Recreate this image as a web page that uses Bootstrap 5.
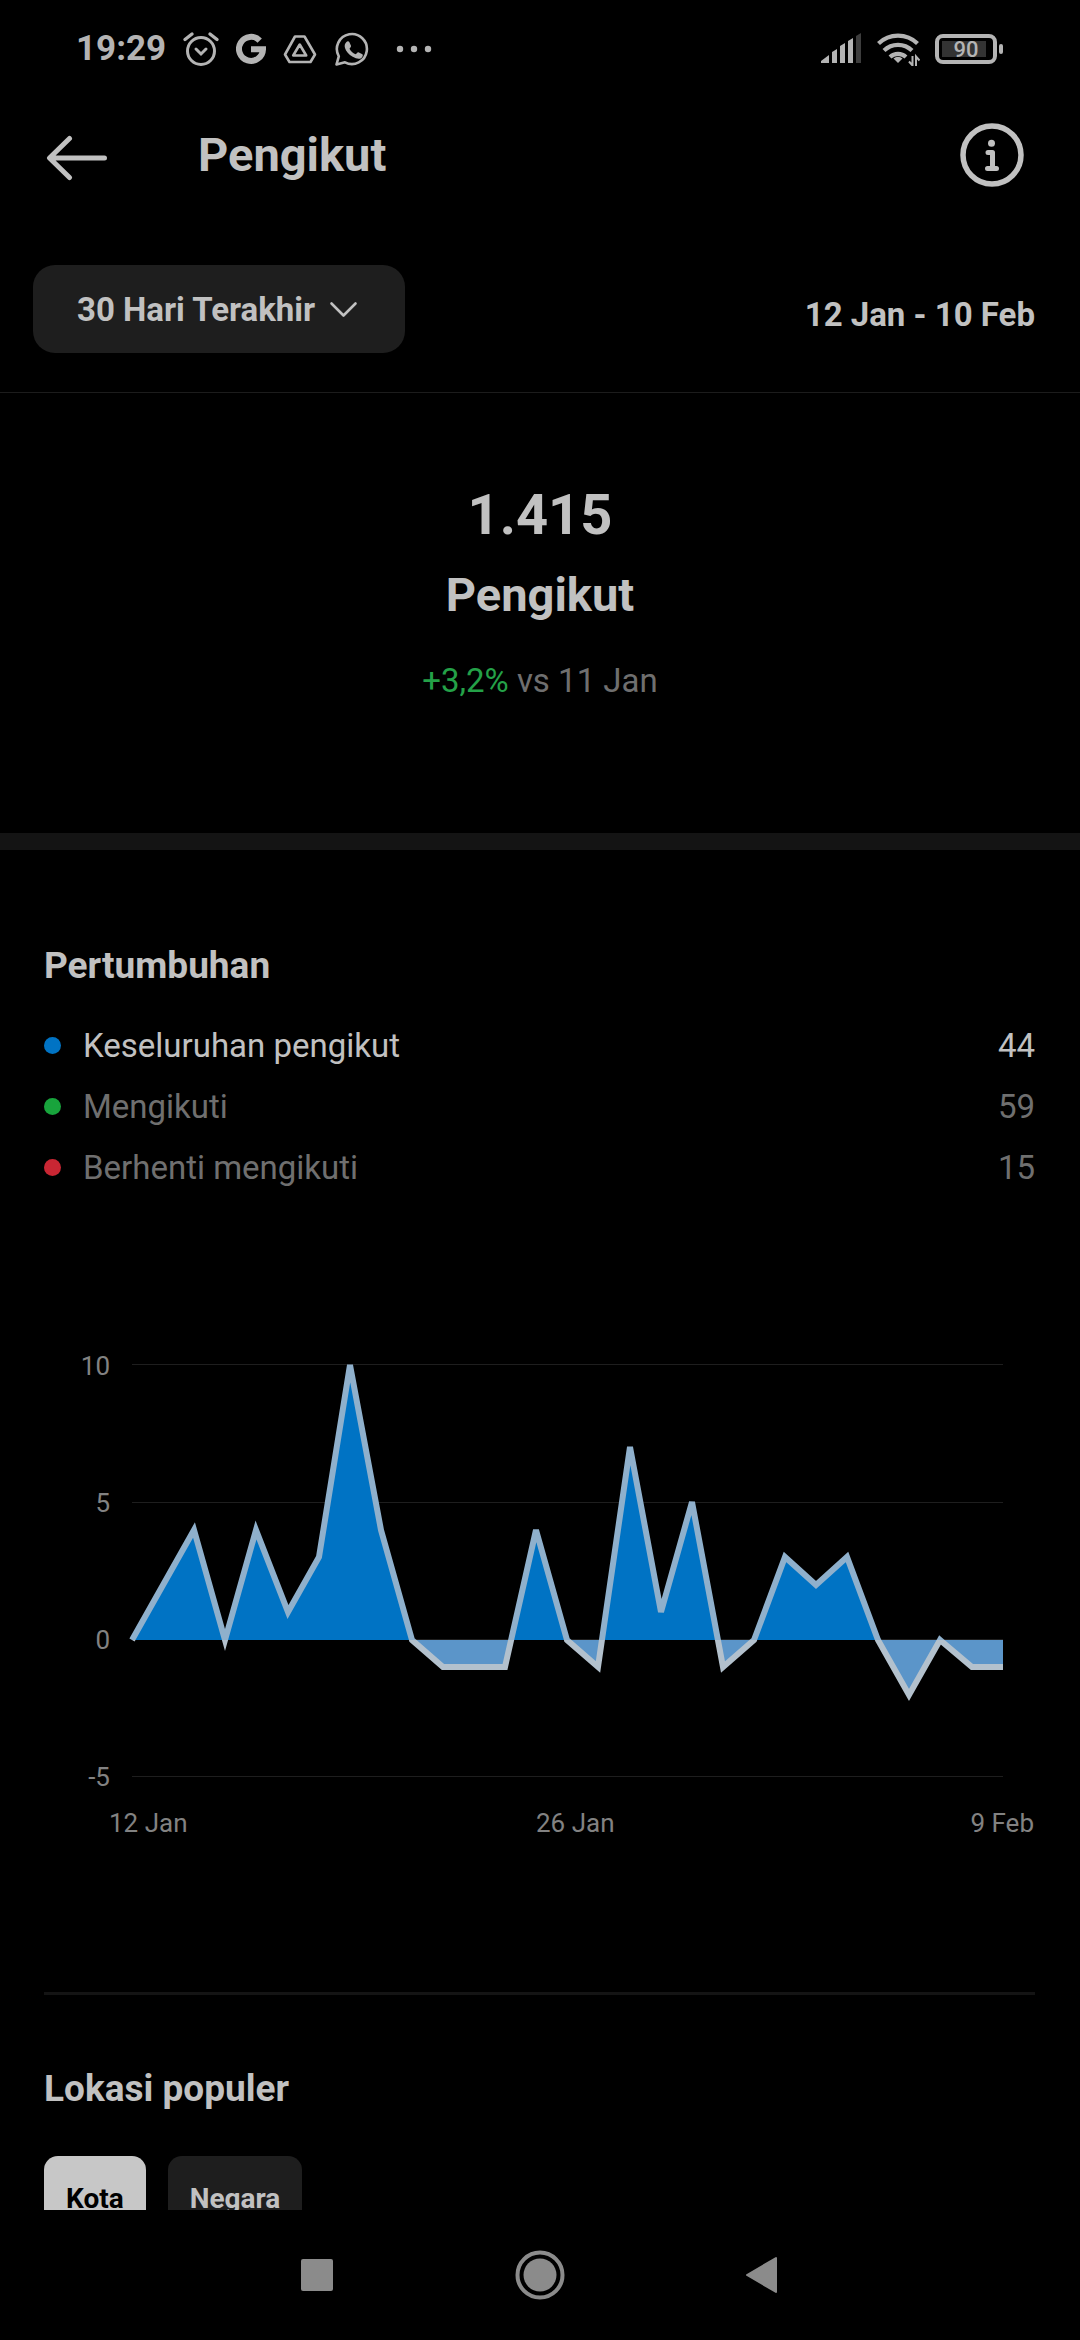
<!DOCTYPE html>
<html lang="id" data-bs-theme="dark">
<head>
<meta charset="utf-8">
<meta name="viewport" content="width=device-width, initial-scale=1">
<title>Pengikut</title>
<link href="https://cdn.jsdelivr.net/npm/bootstrap@5.3.0/dist/css/bootstrap.min.css" rel="stylesheet">
<style>
  :root { --ink: #c1c1c1; --dim: #6f6f6f; --panel: #1e1e1e; --rule: #141414; --sys: #b4b4b4; }
  body { font-family: Roboto, "Noto Sans", sans-serif; background: #000; color: var(--ink); font-size: 33px; }
  svg { display: block; flex: none; }
  .statusbar { height: 98px; padding: 0 77px 0 76px; color: var(--sys); }
  .status-right { gap: 14px; }
  .clock { font-size: 35px; line-height: 40px; font-weight: 700; }
  .topbar { height: 114px; padding: 0 56px 0 45px; }
  .title-text { font-size: 47px; line-height: 56px; font-weight: 700; color: var(--ink); }
  .icon-btn { color: inherit; background: none; border: 0; padding: 0; display: block; }
  .filterbar { padding: 53px 45px 39px 33px; border-bottom: 1px solid #1c1c1c; }
  .range-btn { height: 88px; padding: 2px 42px 0 44px; border: 0; border-radius: 22px; background: var(--panel); color: var(--ink);
    font-size: 33px; line-height: 40px; font-weight: 700; }
  .range-btn svg { margin-left: 10px; }
  .range-dates { font-size: 33px; line-height: 40px; font-weight: 700; padding-top: 11px; }
  .summary { padding: 90px 44px 132px; }
  .total { font-size: 56px; line-height: 64px; font-weight: 700; margin-bottom: 20px; }
  .delta { line-height: 40px; margin-top: 38px; color: var(--dim); }
  .gain { color: #24a148; }
  .band { height: 17px; background: var(--rule); }
  .growth { padding: 94px 45px 142px 44px; }
  .section-title { font-size: 37px; line-height: 44px; font-weight: 700; color: var(--ink); }
  .legend-list { margin: 27px 0 142px; line-height: 61px; color: var(--dim); }
  .legend-list .current { color: var(--ink); }
  .dot { width: 17px; height: 17px; border-radius: 50%; margin-right: 22px; }
  .dot-total { background: #0073c4; }
  .dot-gain { background: #18a43c; }
  .dot-loss { background: #c92633; }
  .axis-text { font-size: 26px; fill: #828282; }
  .places { margin: 0 45px 0 44px; padding-top: 72px; border-top: 3px solid var(--rule); }
  .pills { gap: 22px; margin-top: 45px; }
  .pill { padding: 25px 22px; border: 0; border-radius: 14px; background: var(--panel); color: var(--ink);
    font-size: 28px; line-height: 36px; font-weight: 700; }
  .pill.active { background: #c7c7c7; color: #000; }
  .sysnav { height: 130px; color: #8b8b8b; gap: 180px; }
</style>
</head>
<body class="vh-100 d-flex flex-column overflow-hidden">

<div class="statusbar d-flex align-items-center justify-content-between flex-shrink-0">
  <div class="d-flex align-items-center">
    <span class="clock">19:29</span>
    <svg class="ms-3" width="38" height="38" viewBox="182 30 38 38" fill="none" stroke="currentColor" stroke-width="3" stroke-linecap="round" aria-label="Alarm">
      <circle cx="201" cy="51" r="13.5"/><path d="M196 49l5 5 5-5"/><path stroke-width="3.4" d="M185 39.500l7-5.500M210 34l7 5.500"/>
    </svg>
    <svg class="ms-3" width="30" height="32" viewBox="236 32 30 32" fill="none" stroke="currentColor" stroke-width="6" aria-label="Google">
      <path d="M259.700 39.600A12 12 0 1 0 263 48.300H251"/>
    </svg>
    <svg class="ms-3" width="36" height="32" viewBox="283 32 36 32" fill="none" stroke="currentColor" stroke-width="2.600" stroke-linejoin="round" aria-label="Drive">
      <path d="M296 35.500h9.500l10.500 18-4.500 7.500h-21l-4.500-7.500zM300.700 43.500l-6.500 11h13z"/>
    </svg>
    <svg class="ms-3" width="36" height="36" viewBox="333 30 36 36" aria-label="WhatsApp">
      <path fill="none" stroke="currentColor" stroke-width="2.600" stroke-linejoin="round" d="M335.500 63.500l2.300-8.200A15 15 0 1 1 344 61.300z"/>
      <path fill="currentColor" d="M345.200 41.200c1-1.200 2.600-1.100 3.100-.2l1.700 3.800c.3.800-.9 2.200-1.500 2.900 1.500 2.800 3.800 4.700 6.300 5.600.8-.7 1.700-2.300 2.600-2l4 2c.9.500.2 2.700-1 3.600-2 1.500-5.200.9-8.700-1.100-4-2.300-6.700-5.800-7.700-8.900-.7-2.200-.2-4.300 1.200-5.700z"/>
    </svg>
    <svg class="ms-4" width="40" height="10" viewBox="395 43 40 10" fill="currentColor" aria-label="Lainnya">
      <circle cx="401" cy="48" r="3.200"/><circle cx="415" cy="48" r="3.200"/><circle cx="429" cy="48" r="3.200"/>
    </svg>
  </div>
  <div class="status-right d-flex align-items-center">
    <svg width="42" height="32" viewBox="820 33 42 32" fill="currentColor" aria-label="Sinyal">
      <path d="M821 63v-2l8-6v8zM832 63V52l5-3v14zM840 63V46l5-3v20zM848 63V41l5-3v25z"/><path fill="#3d3d3d" d="M856 63V36l5-3v30z"/>
    </svg>
    <svg width="44" height="34" viewBox="876 33 44 34" fill="none" stroke="currentColor" stroke-width="4.200" aria-label="Wi-Fi">
      <path d="M878.500 44.500a28 28 0 0 1 39 0M884 51.500a20 20 0 0 1 28 0M890 58a12 12 0 0 1 16 0"/>
      <path fill="currentColor" stroke="none" d="M898 64l-4.500-4.500a6.500 6.500 0 0 1 9 0z"/>
      <path stroke-width="2" d="M912.500 57v9.500l-3.500-4M916 67v-9.500l3.500 4"/>
    </svg>
    <svg width="69" height="34" viewBox="934 32 69 34" aria-label="Baterai 90%">
      <rect x="942" y="41" width="44" height="16" fill="#333"/>
      <rect x="937" y="36" width="58" height="26" rx="6" fill="none" stroke="currentColor" stroke-width="4"/>
      <rect x="999" y="44" width="4" height="10" rx="2" fill="currentColor"/>
      <text x="966" y="57" text-anchor="middle" font-size="22" font-weight="500" fill="currentColor">90</text>
    </svg>
  </div>
</div>

<main class="flex-grow-1 overflow-hidden">
  <header class="topbar d-flex align-items-center justify-content-between">
    <div class="d-flex align-items-center">
      <button class="icon-btn" type="button" aria-label="Kembali">
        <svg width="153" height="52" viewBox="45 129 153 52" fill="none" stroke="currentColor" stroke-width="5" stroke-linecap="round" stroke-linejoin="round"><path d="M69.500 138.500L49.500 158l20 19.500M50 158h54.500"/></svg>
      </button>
      <h1 class="title-text m-0">Pengikut</h1>
    </div>
    <button class="icon-btn" type="button" aria-label="Info">
      <svg width="64" height="64" viewBox="960 123 64 64" fill="none" stroke="currentColor" stroke-linecap="round" stroke-linejoin="round"><circle cx="992" cy="155" r="29" stroke-width="5.500"/><path stroke-width="5" d="M988 152.500h4.500v15.500M987.500 168.500h9"/><circle cx="991.500" cy="143.300" r="3.500" fill="currentColor" stroke="none"/></svg>
    </button>
  </header>

  <div class="filterbar d-flex align-items-center justify-content-between">
    <button class="range-btn d-flex align-items-center" type="button">30 Hari Terakhir
      <svg width="38" height="24" viewBox="326 299 38 24" fill="none" stroke="currentColor" stroke-width="2.600" stroke-linecap="round" stroke-linejoin="round"><path d="M332.500 304.500l12 12 12-12"/></svg>
    </button>
    <div class="range-dates">12 Jan - 10 Feb</div>
  </div>

  <section class="summary text-center">
    <div class="total">1.415</div>
    <div class="title-text">Pengikut</div>
    <div class="delta"><span class="gain">+3,2%</span> vs 11 Jan</div>
  </section>

  <div class="band"></div>

  <section class="growth">
    <h2 class="section-title m-0">Pertumbuhan</h2>
    <ul class="legend-list list-unstyled">
      <li class="current d-flex align-items-center"><span class="dot dot-total"></span>Keseluruhan pengikut<span class="ms-auto">44</span></li>
      <li class="d-flex align-items-center"><span class="dot dot-gain"></span>Mengikuti<span class="ms-auto">59</span></li>
      <li class="d-flex align-items-center"><span class="dot dot-loss"></span>Berhenti mengikuti<span class="ms-auto">15</span></li>
    </ul>
    <svg class="w-100" viewBox="0 0 991 510" role="img" aria-label="Grafik pertumbuhan pengikut">
      <defs>
        <clipPath id="above"><rect x="80" y="24" width="879" height="276"/></clipPath>
        <clipPath id="below"><rect x="80" y="300" width="879" height="150"/></clipPath>
        <!-- 31 units per day across, 27.5 units per follower upwards -->
        <path id="area" d="M88 300L119 245 150 190 181 300 212 190 244 272 275 217 306 25 337 190 368 300 399 327 430 327 461 327 492 190 523 300 554 327 586 107 617 272 648 162 679 327 710 300 741 217 772 245 803 217 834 300 865 355 896 300 928 327 959 327V300H88z"/>
        <polyline id="trend" fill="none" stroke-width="6" stroke-miterlimit="4" points="88,300 119,245 150,190 181,300 212,190 244,272 275,217 306,25 337,190 368,300 399,327 430,327 461,327 492,190 523,300 554,327 586,107 617,272 648,162 679,327 710,300 741,217 772,245 803,217 834,300 865,355 896,300 928,327 959,327"/>
      </defs>
      <path stroke="#1e1e1e" shape-rendering="crispEdges" d="M88 24.500h871M88 162.500h871M88 299.500h871M88 436.500h871"/>
      <g clip-path="url(#above)"><use href="#area" fill="#0073c4"/></g>
      <g clip-path="url(#below)"><use href="#area" fill="#5b95c9"/></g>
      <g clip-path="url(#above)"><use href="#trend" stroke="#8fb0cc"/></g>
      <g clip-path="url(#below)"><use href="#trend" stroke="#b3c1cd"/></g>
      <g class="axis-text" text-anchor="end">
        <text x="66" y="35">10</text><text x="66" y="172">5</text><text x="66" y="309">0</text><text x="66" y="446">-5</text>
        <text x="990" y="492">9 Feb</text>
      </g>
      <g class="axis-text"><text x="65" y="492">12 Jan</text><text x="492" y="492">26 Jan</text></g>
    </svg>
  </section>

  <section class="places">
    <h2 class="section-title m-0">Lokasi populer</h2>
    <div class="pills d-flex">
      <button class="pill active" type="button">Kota</button>
      <button class="pill" type="button">Negara</button>
    </div>
  </section>
</main>

<nav class="sysnav d-flex align-items-center justify-content-center flex-shrink-0" aria-label="Navigasi sistem">
  <button class="icon-btn" type="button" aria-label="Aplikasi terbaru"><svg width="36" height="40" viewBox="0 0 36 40" fill="currentColor"><rect x="2" y="4" width="32" height="32" rx="2"/></svg></button>
  <button class="icon-btn" type="button" aria-label="Beranda"><svg width="50" height="50" viewBox="0 0 50 50"><circle cx="25" cy="25" r="22.500" fill="none" stroke="currentColor" stroke-width="4"/><circle cx="25" cy="25" r="16.500" fill="currentColor"/></svg></button>
  <button class="icon-btn" type="button" aria-label="Kembali"><svg width="36" height="40" viewBox="0 0 36 40" fill="currentColor" stroke="currentColor" stroke-width="2" stroke-linejoin="round"><path d="M2 20L31 3v34z"/></svg></button>
</nav>

<script src="https://cdn.jsdelivr.net/npm/bootstrap@5.3.0/dist/js/bootstrap.bundle.min.js"></script>
</body>
</html>
